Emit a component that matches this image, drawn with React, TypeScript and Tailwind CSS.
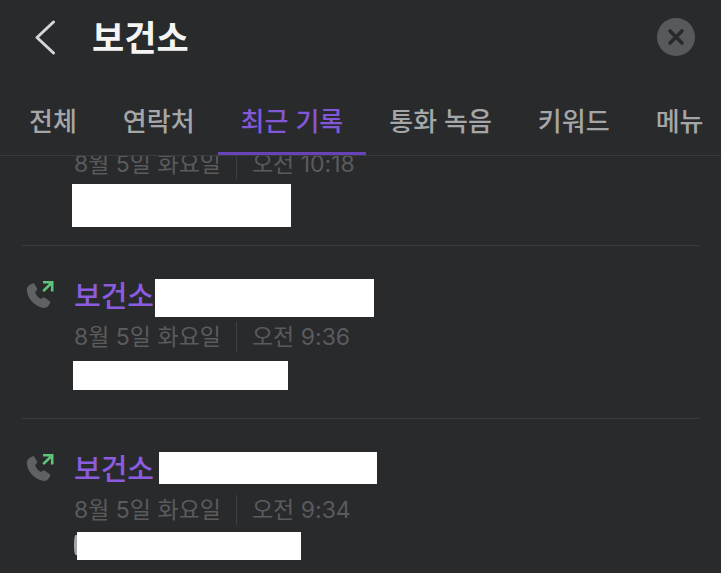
import React, { useState } from 'react';

interface CallRecord {
  id: number;
  name?: string;
  date: string;
  time: string;
  nameMask?: string;
  noteMask: string;
  notePeek?: boolean;
}

const tabs = ['전체', '연락처', '최근 기록', '통화 녹음', '키워드', '메뉴'];

const records: CallRecord[] = [
  { id: 1, date: '8월 5일 화요일', time: '오전 10:18', noteMask: 'h-[43px] w-[219px]' },
  {
    id: 2,
    name: '보건소',
    date: '8월 5일 화요일',
    time: '오전 9:36',
    nameMask: 'ml-px h-[38px] w-[219px]',
    noteMask: 'ml-px mt-1 h-[29px] w-[215px]',
  },
  {
    id: 3,
    name: '보건소',
    date: '8월 5일 화요일',
    time: '오전 9:34',
    nameMask: 'ml-[5px] mb-1.5 h-[32px] w-[218px]',
    noteMask: 'mt-0.5 h-[28px] w-[224px]',
    notePeek: true,
  },
];

const OutgoingCallIcon: React.FC = () => (
  <svg viewBox="0 0 28 30" className="mt-[3px] h-[30px] w-7 shrink-0" fill="none" aria-hidden="true">
    <path
      d="M4.3 4.6 6.3 3.5C7.2 3 8.2 3.3 8.7 4.2L11 8.4C11.4 9.2 11.2 10 10.5 10.6L9.1 11.9C9.7 14.7 12 17.6 15 18.9L16.7 17.8C17.4 17.3 18.2 17.3 18.9 17.8L23.4 21C24.3 21.6 24.5 22.6 23.9 23.5L22.8 25.3C21.4 27.6 18.6 28.5 15.6 27.6C7.7 25.3 1.4 18.2 .8 10.5C.6 8 2 5.8 4.3 4.6Z"
      fill="#606163"
    />
    <path d="M17 2.2H26.2V11.5M26 2.5 17.2 11.2" stroke="#5fc47a" strokeWidth="2.6" />
  </svg>
);

const RecordRow: React.FC<{ record: CallRecord }> = ({ record }) => (
  <li className="mx-[22px] border-b border-[#3a3b3d] pb-7 pl-1 first:pb-[18px] last:border-b-0">
    <div className={record.name ? 'flex gap-[18px] pt-[31px]' : 'pl-[46px]'}>
      {record.name && <OutgoingCallIcon />}
      <div className="min-w-0 flex-1">
        {record.name && (
          <div className="flex h-10 items-end pl-0.5">
            <a href="#call" className="pb-0.5 text-[29px] leading-9 font-medium whitespace-nowrap text-[#8b5ce0]">
              {record.name}
            </a>
            <span className={`bg-white ${record.nameMask}`} />
          </div>
        )}
        <div className="flex items-center pl-0.5 text-[23px] leading-10 whitespace-nowrap text-[#5a5b5d]">
          <span>{record.date}</span>
          <span className="mx-[15px] h-[30px] w-px bg-[#3f4042]" />
          <span>{record.time}</span>
        </div>
        <div className="flex items-center">
          {record.notePeek && <span className="ml-0.5 h-5 w-[3px] rounded-l-[100%] bg-[#a5a6a8]" />}
          <span className={`block bg-white ${record.noteMask}`} />
        </div>
      </div>
    </div>
  </li>
);

export default function App() {
  const [query, setQuery] = useState('보건소');
  const [activeTab, setActiveTab] = useState('최근 기록');

  return (
    <div className="flex h-screen flex-col overflow-hidden bg-[#292a2c] font-['Inter','Noto_Sans_CJK_KR',sans-serif]">
      <header className="shrink-0 border-b border-[#3a3b3d]">
        <div className="flex h-[74px] items-center pr-[26px] pl-[34px]">
          <button type="button" aria-label="뒤로" className="shrink-0">
            <svg viewBox="0 0 24 36" className="h-9 w-6" fill="none" aria-hidden="true">
              <path d="M19.5 3 3 18.5 19.5 34" stroke="#d6d6d8" strokeWidth="3" strokeLinecap="round" strokeLinejoin="round" />
            </svg>
          </button>
          <input
            type="text"
            aria-label="검색"
            value={query}
            onChange={(e) => setQuery(e.target.value)}
            className="ml-[34px] h-14 min-w-0 flex-1 bg-transparent pb-1 text-[35px] font-bold text-[#f4f4f5] outline-none"
          />
          <button type="button" aria-label="지우기" onClick={() => setQuery('')} className="shrink-0">
            <svg viewBox="0 0 38 38" className="size-[38px]" fill="none" aria-hidden="true">
              <circle cx="19" cy="19" r="19" fill="#58595b" />
              <path d="M13 13 25 25M25 13 13 25" stroke="#292a2c" strokeWidth="3.6" strokeLinecap="round" />
            </svg>
          </button>
        </div>
        <nav className="flex h-[81px] items-stretch overflow-hidden pl-1.5">
          {tabs.map((tab) => (
            <button
              key={tab}
              type="button"
              onClick={() => setActiveTab(tab)}
              className={`shrink-0 border-b-3 px-[23px] pt-[29px] pb-[11px] text-[26px] leading-[38px] font-medium whitespace-nowrap ${
                tab === activeTab ? 'border-[#6942b8] text-[#8257d8]' : 'border-transparent text-[#a5a6a8]'
              }`}
            >
              {tab}
            </button>
          ))}
        </nav>
      </header>

      <main className="min-h-0 flex-1 overflow-hidden">
        <ul className="-mt-3">
          {records.map((record) => (
            <RecordRow key={record.id} record={record} />
          ))}
        </ul>
      </main>
    </div>
  );
}
